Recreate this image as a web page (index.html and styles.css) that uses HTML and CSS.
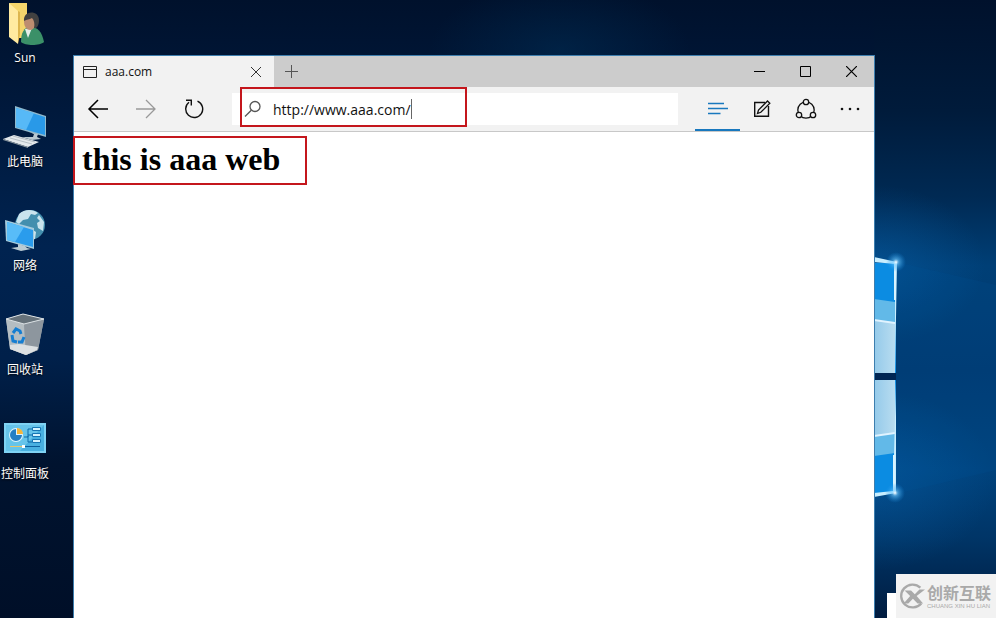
FILE: index.html
```html
<!DOCTYPE html>
<html lang="zh-CN">
<head>
  <meta charset="UTF-8">
  <meta name="viewport" content="width=device-width, initial-scale=1.0">
  <title>aaa.com</title>
  <link rel="stylesheet" href="styles.css">
</head>
<body>
  <div class="desktop">
    <svg class="wallpaper" viewBox="0 0 996 618" preserveAspectRatio="xMaxYMid slice" aria-hidden="true">
      <defs>
        <linearGradient id="night" x1="0" y1="0" x2="0" y2="1">
          <stop offset="0" stop-color="#00112c"/>
          <stop offset=".4" stop-color="#002350"/>
          <stop offset=".58" stop-color="#00204a"/>
          <stop offset=".75" stop-color="#00132f"/>
          <stop offset="1" stop-color="#000f28"/>
        </linearGradient>
        <linearGradient id="sky" x1="0" y1="0" x2="0" y2="1">
          <stop offset="0" stop-color="#00112c"/>
          <stop offset=".18" stop-color="#001b3b"/>
          <stop offset=".32" stop-color="#002a54"/>
          <stop offset=".43" stop-color="#003f76"/>
          <stop offset=".6" stop-color="#003a70"/>
          <stop offset=".76" stop-color="#00427c"/>
          <stop offset=".87" stop-color="#003567"/>
          <stop offset="1" stop-color="#001c40"/>
        </linearGradient>
        <radialGradient id="glow">
          <stop offset="0" stop-color="#0a6fc0" stop-opacity=".35"/>
          <stop offset="1" stop-color="#0a6fc0" stop-opacity="0"/>
        </radialGradient>
        <radialGradient id="haze">
          <stop offset="0" stop-color="#003a66" stop-opacity=".35"/>
          <stop offset="1" stop-color="#003a66" stop-opacity="0"/>
        </radialGradient>
        <radialGradient id="flare">
          <stop offset="0" stop-color="#fff"/>
          <stop offset=".3" stop-color="#6cc8ff" stop-opacity=".6"/>
          <stop offset="1" stop-color="#1490e8" stop-opacity="0"/>
        </radialGradient>
        <linearGradient id="pane" x1="0" y1="0" x2="1" y2="0">
          <stop offset="0" stop-color="#94caea"/>
          <stop offset="1" stop-color="#b8dcf0"/>
        </linearGradient>
      </defs>
      <rect width="996" height="618" fill="url(#night)"/>
      <ellipse cx="560" cy="50" rx="130" ry="70" fill="url(#haze)"/>
      <rect x="874" width="122" height="618" fill="url(#sky)"/>
      <ellipse cx="875" cy="265" rx="110" ry="80" fill="url(#glow)"/>
      <ellipse cx="875" cy="480" rx="120" ry="90" fill="url(#glow)"/>
      <path d="M896 262L996 285V470L896 494z" fill="#0059a8" opacity=".12"/>
      <!-- right half of the window logo -->
      <path d="M874 263L896 262V373H874z" fill="#0b8ce2"/>
      <path d="M874 299L895 302V373H874z" fill="#62b9e8"/>
      <path d="M874 320L895 323V373H874z" fill="url(#pane)"/>
      <path d="M874 319L895 322V324L874 321z" fill="#e0f3ff"/>
      <path d="M874 380H896V492L874 494z" fill="#0b8ce2"/>
      <path d="M874 380H895V453L874 456z" fill="#62b9e8"/>
      <path d="M874 380H895V433L874 436z" fill="url(#pane)"/>
      <path d="M874 435L895 432V434L874 437z" fill="#e0f3ff"/>
      <rect x="874" y="373" width="22" height="7" fill="#002654"/>
      <path d="M874 257L897 262L895 373V264L874 262zM874 497L896 493V380L893 491L874 493z" fill="#c8eeff"/>
      <path d="M895 262V300M894 455V492" stroke="#d8f4ff" stroke-width="2"/>
      <circle cx="896" cy="262" r="10" fill="url(#flare)"/>
      <circle cx="895" cy="493" r="10" fill="url(#flare)"/>
    </svg>

    <nav class="shortcuts">
      <a class="shortcut" href="#">
        <svg width="50" height="48" viewBox="0 0 50 48" aria-hidden="true">
          <path d="M9 3h18v35H15z" fill="#f5d66c"/>
          <path d="M9 3l9 8v33L9 37z" fill="#ffeaa0"/>
          <path d="M18 11l2 1v22l-2 10z" fill="#ddb64e"/>
          <path d="M21 42c0-9 3-15 9-15 8 0 12 5 14 15-4 4-19 4-23 0z" fill="#3b9068"/>
          <path d="M25 29l3 9 4-10z" fill="#e4eee9"/>
          <ellipse cx="30" cy="22" rx="6" ry="8" fill="#bd8d70"/>
          <path d="M24 21c-1-11 15-11 15-1 0 5-2 9-5 8 1-4 0-8-2-10-3 2-5 1-8 3z" fill="#414141"/>
        </svg>
        <span>Sun</span>
      </a>
      <a class="shortcut" href="#">
        <svg width="50" height="48" viewBox="0 0 50 48" aria-hidden="true">
          <path d="M15 2l31 10v21L15 24z" fill="#8fb9cd"/>
          <path d="M16 4l29 9v18l-29-8z" fill="#2999e8"/>
          <path d="M16 4l18 5-8 17-10-3z" fill="#57b9f7"/>
          <path d="M29 28l5 2-1 3-11 0 10 3 9-1-4-2 1-3z" fill="#b9c8d0"/>
          <path d="M14 31l25 7-11 5L3 35z" fill="#e4e9ec"/>
          <path d="M10 34l22 6M13 32l22 6" stroke="#b6bfc5"/>
          <path d="M3 35l25 8v1L3 36z" fill="#8d9aa1"/>
        </svg>
        <span>此电脑</span>
      </a>
      <a class="shortcut" href="#">
        <svg width="50" height="48" viewBox="0 0 50 48" aria-hidden="true">
          <circle cx="30" cy="17" r="15" fill="#438fae"/>
          <path d="M19 6c5-5 14-5 19-1l-3 2-4-1-3 5-5 1-4 4-3-2zM39 7l5 7-1 9-5-3-1-5 3-2-3-3zM30 20l6 4-1 7-4 1z" fill="#c9e3ed"/>
          <path d="M5 12l29 8v21L6 33z" fill="#a4cbdd"/>
          <path d="M7 14l26 8v17L7 32z" fill="#2a9cec"/>
          <path d="M7 14l17 5-9 15-8-2z" fill="#58bcf8"/>
          <path d="M18 36l7 2 2 2 4 1-10 2-10-3 7-1z" fill="#bacbd3"/>
        </svg>
        <span>网络</span>
      </a>
      <a class="shortcut" href="#">
        <svg width="50" height="48" viewBox="0 0 50 48" aria-hidden="true">
          <path d="M6 7l17-5 21 5-6 31-12 5-16-6z" fill="#a2adb4"/>
          <path d="M6 7l18 5 2 31-16-6z" fill="#b4bdc2"/>
          <path d="M24 12l20-5-6 31-12 5z" fill="#8d969e"/>
          <path d="M6 7l17-5 21 5-20 5z" fill="#66727a" stroke="#dce2e5"/>
          <path d="M10 33l9-1 19 3-1 3-11 5-16-6z" fill="#dce0e2"/>
          <path d="M13 21l3-4 4 2 1 3M12 23l1 6 4 1M18 30h4l2-5" fill="none" stroke="#157ed2" stroke-width="3"/>
        </svg>
        <span>回收站</span>
      </a>
      <a class="shortcut" href="#">
        <svg width="50" height="48" viewBox="0 0 50 48" aria-hidden="true">
          <rect x="4" y="7" width="42" height="30" fill="#7fd3f4"/>
          <rect x="6" y="9" width="38" height="26" fill="#48b0e0"/>
          <path d="M6 9h38L20 35H6z" fill="#66c4ea"/>
          <circle cx="16" cy="19" r="7" fill="#dff4fc"/>
          <path d="M16 19v-6a6 6 0 1 0 6 6z" fill="#257fc4"/>
          <path d="M17 18v-6a6 6 0 0 1 6 6z" fill="#f6b53a"/>
          <path d="M24 21h4V13h4M28 19h4M28 20v6h4" fill="none" stroke="#0d6aa8"/>
          <path d="M32.500 11.500h8v3h-8zM32.500 17.500h8v3h-8zM32.500 23.500h8v3h-8z" fill="#d4f3fe" stroke="#1676b4"/>
          <path d="M10 30.500h12" stroke="#e8c56a"/>
          <path d="M25 30.500h15" stroke="#0b5f9c"/>
          <rect x="22" y="29" width="3" height="3" fill="#fff"/>
        </svg>
        <span>控制面板</span>
      </a>
    </nav>

    <main class="browser">
      <div class="titlebar">
        <div class="tab">
          <svg width="16" height="14" viewBox="0 0 16 14" aria-hidden="true"><path d="M1.500 1.500h13v11h-13zM1.500 4.500h13" fill="none" stroke="#222"/></svg>
          <span class="tab-title">aaa.com</span>
          <button class="tab-close" aria-label="Close tab">
            <svg width="12" height="12" viewBox="0 0 12 12"><path d="M1 1l10 10M11 1L1 11" stroke="#333"/></svg>
          </button>
        </div>
        <button class="new-tab" aria-label="New tab">
          <svg width="13" height="13" viewBox="0 0 13 13"><path d="M6.500 0v13M0 6.500h13" stroke="#555"/></svg>
        </button>
        <div class="window-controls">
          <button aria-label="Minimize"><svg width="11" height="11" viewBox="0 0 11 11"><path d="M0 5.500h11" stroke="#000"/></svg></button>
          <button aria-label="Maximize"><svg width="11" height="11" viewBox="0 0 11 11"><path d="M.5.5h10v10H.5z" fill="none" stroke="#000"/></svg></button>
          <button aria-label="Close"><svg width="11" height="11" viewBox="0 0 11 11"><path d="M0 0l11 11M11 0L0 11" stroke="#000" stroke-width="1.200"/></svg></button>
        </div>
      </div>

      <div class="toolbar">
        <div class="nav-buttons">
          <button aria-label="Back"><svg width="22" height="20" viewBox="0 0 22 20"><path d="M21 10H2M11 1l-9 9 9 9" fill="none" stroke="#000" stroke-width="1.500"/></svg></button>
          <button aria-label="Forward"><svg width="22" height="20" viewBox="0 0 22 20"><path d="M1 10h19M11 1l9 9-9 9" fill="none" stroke="#999" stroke-width="1.300"/></svg></button>
          <button aria-label="Refresh"><svg width="20" height="20" viewBox="0 0 20 20"><path d="M13.500 2.200A8.500 8.500 0 1 1 5 3.300M2 1.300h5.300v5.300" fill="none" stroke="#111" stroke-width="1.400"/></svg></button>
        </div>
        <div class="address">
          <svg width="18" height="18" viewBox="0 0 18 18" aria-hidden="true"><circle cx="11" cy="6.500" r="5" fill="none" stroke="#555" stroke-width="1.300"/><path d="M7.300 10.200L1 16.500" stroke="#555" stroke-width="1.300"/></svg>
          <input class="address-input" type="text" aria-label="Address" value="http://www.aaa.com/">
          <span class="caret"></span>
          <span class="mark mark-address"></span>
        </div>
        <div class="tools">
          <button class="active" aria-label="Hub"><svg width="20" height="14" viewBox="0 0 20 14"><path d="M0 1.500h16M0 6.500h20M0 11.500h12.500" stroke="#1878be" stroke-width="1.500"/></svg></button>
          <button aria-label="Web note"><svg width="18" height="18" viewBox="0 0 18 18"><path d="M12 2.500H1.700v13.800h13.800V6" fill="none" stroke="#111" stroke-width="1.400"/><path d="M4.500 13.500l1-3.500 9-9 2.300 2.300-9 9z" fill="#eee" stroke="#111" stroke-width="1.300"/></svg></button>
          <button aria-label="Share"><svg width="22" height="22" viewBox="0 0 22 22"><circle cx="11" cy="12" r="8.200" fill="none" stroke="#111" stroke-width="1.300"/><g fill="#f2f2f2" stroke="#111" stroke-width="1.300"><circle cx="11" cy="4" r="2.700"/><circle cx="4" cy="17" r="2.700"/><circle cx="18" cy="17" r="2.700"/></g></svg></button>
          <button aria-label="More"><svg width="20" height="4" viewBox="0 0 20 4"><g fill="#111"><circle cx="2" cy="2" r="1.300"/><circle cx="10" cy="2" r="1.300"/><circle cx="18" cy="2" r="1.300"/></g></svg></button>
        </div>
      </div>

      <div class="page">
        <h1>this is aaa web</h1>
        <span class="mark mark-heading"></span>
      </div>
    </main>

    <div class="watermark">
      <svg width="26" height="26" viewBox="0 0 28 28" aria-hidden="true">
        <path d="M23 5A12.300 12.300 0 1 0 24 22" fill="none" stroke="#a9a9a9" stroke-width="2.500"/>
        <path d="M6 8h7l4 4 5-5h6l-9 7 7 8h-6l-5-5-5 5H5l7-8z" fill="#a9a9a9"/>
      </svg>
      <div class="watermark-text">
        <span class="watermark-name">创新互联</span>
        <span class="watermark-sub">CHUANG XIN HU LIAN</span>
      </div>
    </div>
  </div>
</body>
</html>
```
FILE: styles.css
```css
* {
  margin: 0;
  padding: 0;
  box-sizing: border-box;
}

body {
  font-family: "Open Sans", "Noto Sans CJK SC", sans-serif;
  color: #111;
  overflow: hidden;
}

button {
  display: flex;
  align-items: center;
  justify-content: center;
  border: none;
  background: none;
}

.desktop {
  position: relative;
  height: 100vh;
  background: #00122e;
  overflow: hidden;
}

.wallpaper {
  position: absolute;
  width: 100%;
  height: 100%;
}

/* desktop icons */
.shortcuts {
  position: absolute;
  top: 0;
  left: 0;
  display: flex;
  flex-direction: column;
  gap: 36px;
}

.shortcut {
  display: flex;
  flex-direction: column;
  align-items: center;
  width: 50px;
  color: #fff;
  font-size: 12px;
  line-height: 20px;
  text-decoration: none;
  text-shadow: 0 1px 2px #000;
  white-space: nowrap;
}

/* browser window */
.browser {
  position: absolute;
  top: 55px;
  right: 121px;
  bottom: 0;
  left: 73px;
  display: flex;
  flex-direction: column;
  border: 1px solid #3d7eae;
  border-bottom: none;
  background: #fff;
}

.titlebar {
  display: flex;
  height: 31px;
  background: #cccccc;
}

.tab {
  display: flex;
  align-items: center;
  width: 200px;
  padding: 0 8px;
  background: #f2f2f2;
}

.tab-title {
  flex: 1;
  padding-left: 7px;
  font-size: 12px;
}

.tab-close {
  width: 20px;
  height: 20px;
}

.new-tab {
  width: 34px;
}

.window-controls {
  display: flex;
  margin-left: auto;
}

.window-controls button {
  width: 46px;
}

.toolbar {
  display: flex;
  height: 45px;
  padding-right: 2px;
  border-bottom: 1px solid #c8c8c8;
  background: #f2f2f2;
}

.nav-buttons {
  display: flex;
}

.nav-buttons button {
  width: 48px;
}

.address {
  position: relative;
  flex: 1;
  display: flex;
  align-items: center;
  margin: 6px 17px 6px 14px;
  padding-left: 12px;
  background: #fff;
}

.address-input {
  field-sizing: content;
  margin-left: 11px;
  padding-top: 2px;
  border: none;
  outline: none;
  background: none;
  font: 14px/20px "Open Sans", sans-serif;
  color: #111;
}

.caret {
  width: 1px;
  height: 20px;
  background: #666;
}

.tools {
  display: flex;
}

.tools button {
  width: 44px;
}

.tools .active {
  width: 45px;
  border-top: 2px solid transparent;
  border-bottom: 2px solid #1878be;
}

.page {
  position: relative;
  flex: 1;
  padding: 8px;
}

.page h1 {
  font: bold 32px/38px "Liberation Serif", serif;
  color: #000;
}

/* red highlight frames */
.mark {
  position: absolute;
  border: 2px solid #c4161c;
}

.mark-address {
  top: -6px;
  left: 8px;
  width: 227px;
  height: 40px;
}

.mark-heading {
  top: 4px;
  left: -1px;
  width: 234px;
  height: 49px;
}

/* corner watermark */
.watermark {
  position: absolute;
  right: 0;
  bottom: 0;
  display: flex;
  align-items: center;
  gap: 2px;
  width: 100px;
  height: 44px;
  padding-left: 3px;
  background: #f2f2f2;
  color: #a9a9a9;
}

.watermark::before {
  content: "";
  position: absolute;
  right: 100%;
  bottom: 0;
  width: 9px;
  height: 25px;
  background: #fff;
}

.watermark-text {
  display: flex;
  flex-direction: column;
  white-space: nowrap;
}

.watermark-name {
  font: bold 16px/20px "Noto Sans CJK SC", sans-serif;
}

.watermark-sub {
  font: 6px/8px "Liberation Sans", sans-serif;
}
```
